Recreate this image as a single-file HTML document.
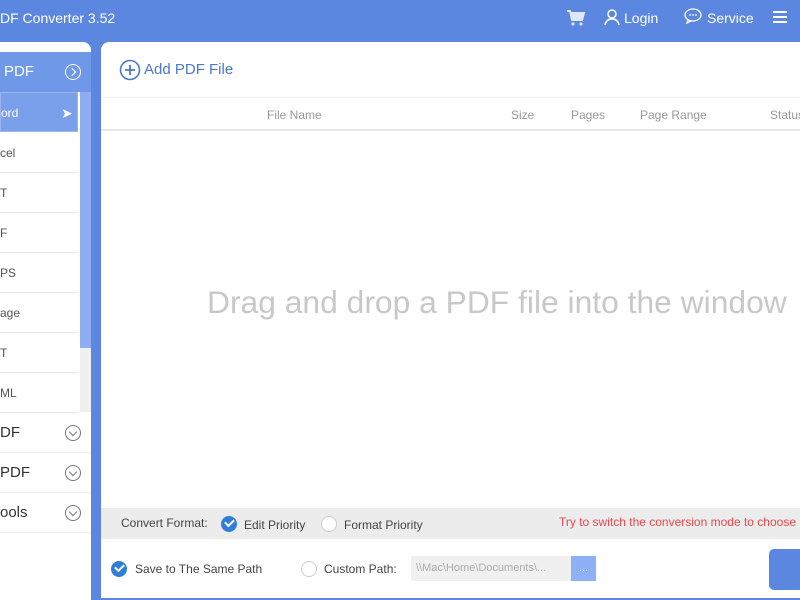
<!DOCTYPE html>
<html><head><style>
*{margin:0;padding:0;box-sizing:border-box}
body{width:800px;height:600px;overflow:hidden;background:#5b87e0;font-family:"Liberation Sans",sans-serif;position:relative}
.a{position:absolute}
.top{color:#fff;font-size:14px}
.side{left:0;top:42px;width:91px;height:558px;background:#fff;border-radius:0 8px 0 0;overflow:hidden}
.main{left:101px;top:42px;width:699px;height:558px;background:#fff;border-radius:8px 0 0 0;overflow:hidden}
.item{position:absolute;left:0;width:78px;height:40px;border-bottom:1px solid #e8e8e8;font-size:12px;color:#555;line-height:40px}
.grp{position:absolute;left:0;width:91px;height:40px;border-bottom:1px solid #eee;font-size:15px;color:#333;line-height:40px}
.chev{position:absolute;right:10px;top:12px;width:16px;height:16px;border:1.3px solid #777;border-radius:50%}
.chev:after{content:"";position:absolute;left:4px;top:2.5px;width:5px;height:5px;border-right:1.3px solid #777;border-bottom:1.3px solid #777;transform:rotate(45deg)}
.chev.r{border-color:#fff}
.chev.r:after{border-color:#fff;left:2.5px;top:4px;transform:rotate(-45deg)}
.th{position:absolute;top:66px;font-size:12px;color:#999}
.rad{position:absolute;width:16px;height:16px;border-radius:50%}
.on{background:#2f7fd8}
.on:after{content:"";position:absolute;left:4px;top:3px;width:7px;height:4px;border-left:2px solid #fff;border-bottom:2px solid #fff;transform:rotate(-45deg)}
.off{border:1px solid #ccc;background:#fff}
</style></head><body>
<div class="a top" style="left:0;top:10px;font-size:14px">DF Converter 3.52</div>
<svg class="a" style="left:566px;top:9px" width="20" height="18" viewBox="0 0 20 18"><path d="M1 2h3l2 9h10l2-7H5" fill="none" stroke="#dfe8fb" stroke-width="2"/><path d="M5 4h13l-2 7H6z" fill="#dfe8fb"/><circle cx="7" cy="15" r="1.6" fill="#dfe8fb"/><circle cx="15" cy="15" r="1.6" fill="#dfe8fb"/></svg>
<svg class="a" style="left:604px;top:9px" width="16" height="17" viewBox="0 0 16 17"><circle cx="8" cy="5" r="4" fill="none" stroke="#fff" stroke-width="1.5"/><path d="M1 16c1-5 4-6 7-6s6 1 7 6" fill="none" stroke="#fff" stroke-width="1.5"/></svg>
<div class="a top" style="left:624px;top:10px">Login</div>
<svg class="a" style="left:684px;top:8px" width="18" height="16" viewBox="0 0 18 16"><ellipse cx="9" cy="7" rx="8" ry="6" fill="none" stroke="#fff" stroke-width="1.3"/><path d="M4 12l-1 3 4-2" fill="none" stroke="#fff" stroke-width="1.3"/><circle cx="6" cy="7" r=".9" fill="#fff"/><circle cx="9" cy="7" r=".9" fill="#fff"/><circle cx="12" cy="7" r=".9" fill="#fff"/></svg>
<div class="a top" style="left:707px;top:10px">Service</div>
<div class="a" style="left:773px;top:11px;width:14px;height:12px;border-top:2px solid #fff;border-bottom:2px solid #fff"><div style="margin-top:3px;height:2px;background:#fff"></div></div>

<div class="a side">
 <div class="a" style="left:0;top:10px;width:91px;height:40px;background:#6f98e8;color:#fff;font-size:15px;line-height:40px;padding-left:4px">PDF<div class="chev r" style="top:12px"></div></div>
 <div class="a" style="left:80px;top:50px;width:11px;height:320px;background:#f0f0f0"></div>
 <div class="a" style="left:80px;top:50px;width:11px;height:256px;background:#8dadf0"></div>
 <div class="item" style="top:50px;background:#7aa0ec;color:#fff;border:1px solid #9ab7f0">ord<span style="position:absolute;left:60px;font-size:14px">&#10148;</span></div>
 <div class="item" style="top:91px">cel</div>
 <div class="item" style="top:131px">T</div>
 <div class="item" style="top:171px">F</div>
 <div class="item" style="top:211px">PS</div>
 <div class="item" style="top:251px">age</div>
 <div class="item" style="top:291px">T</div>
 <div class="item" style="top:331px">ML</div>
 <div class="grp" style="top:371px">DF<div class="chev"></div></div>
 <div class="grp" style="top:411px">PDF<div class="chev"></div></div>
 <div class="grp" style="top:451px">ools<div class="chev"></div></div>
</div>

<div class="a main">
 <svg class="a" style="left:18px;top:17px" width="22" height="22" viewBox="0 0 22 22"><circle cx="11" cy="11" r="9.5" fill="none" stroke="#4a78d0" stroke-width="1.6"/><path d="M11 6v10M6 11h10" stroke="#4a78d0" stroke-width="1.8"/></svg>
 <div class="a" style="left:43px;top:19px;font-size:15px;color:#4a78d0">Add PDF File</div>
 <div class="a" style="left:0;top:55px;width:699px;height:1px;background:#f0f0f0"></div>
 <div class="a" style="left:0;top:87px;width:699px;height:2px;background:#e6e6e6"></div>
 <div class="th" style="left:166px">File Name</div>
 <div class="th" style="left:410px">Size</div>
 <div class="th" style="left:470px">Pages</div>
 <div class="th" style="left:539px">Page Range</div>
 <div class="th" style="left:669px">Status</div>
 <div class="a" style="left:106px;top:242px;font-size:31.8px;color:#c8c8c8;white-space:nowrap">Drag and drop a PDF file into the window</div>
 <div class="a" style="left:0;top:466px;width:699px;height:31px;background:#ececec"></div>
 <div class="a" style="left:20px;top:474px;font-size:12px;color:#444">Convert Format:</div>
 <div class="rad on" style="left:120px;top:474px"></div>
 <div class="a" style="left:143px;top:476px;font-size:12px;color:#444">Edit Priority</div>
 <div class="rad off" style="left:220px;top:474px"></div>
 <div class="a" style="left:243px;top:476px;font-size:12px;color:#444">Format Priority</div>
 <div class="a" style="left:458px;top:473px;font-size:12px;color:#e5484d;white-space:nowrap">Try to switch the conversion mode to choose</div>
 <div class="rad on" style="left:10px;top:519px"></div>
 <div class="a" style="left:34px;top:520px;font-size:12px;color:#444">Save to The Same Path</div>
 <div class="rad off" style="left:200px;top:519px"></div>
 <div class="a" style="left:223px;top:520px;font-size:12px;color:#444">Custom Path:</div>
 <div class="a" style="left:310px;top:514px;width:160px;height:25px;background:#f0f0f0;font-size:11px;color:#aaa;line-height:25px;padding-left:5px;white-space:nowrap;overflow:hidden">\\Mac\Home\Documents\...</div>
 <div class="a" style="left:470px;top:514px;width:25px;height:25px;background:#8fb0f4;color:#fff;text-align:center;font-size:11px;line-height:25px">...</div>
 <div class="a" style="left:668px;top:507px;width:40px;height:41px;background:#5b87e0;border-radius:5px"></div>
 <div class="a" style="left:0;top:556px;width:699px;height:2px;background:#5b87e0"></div>
</div>
</body></html>
